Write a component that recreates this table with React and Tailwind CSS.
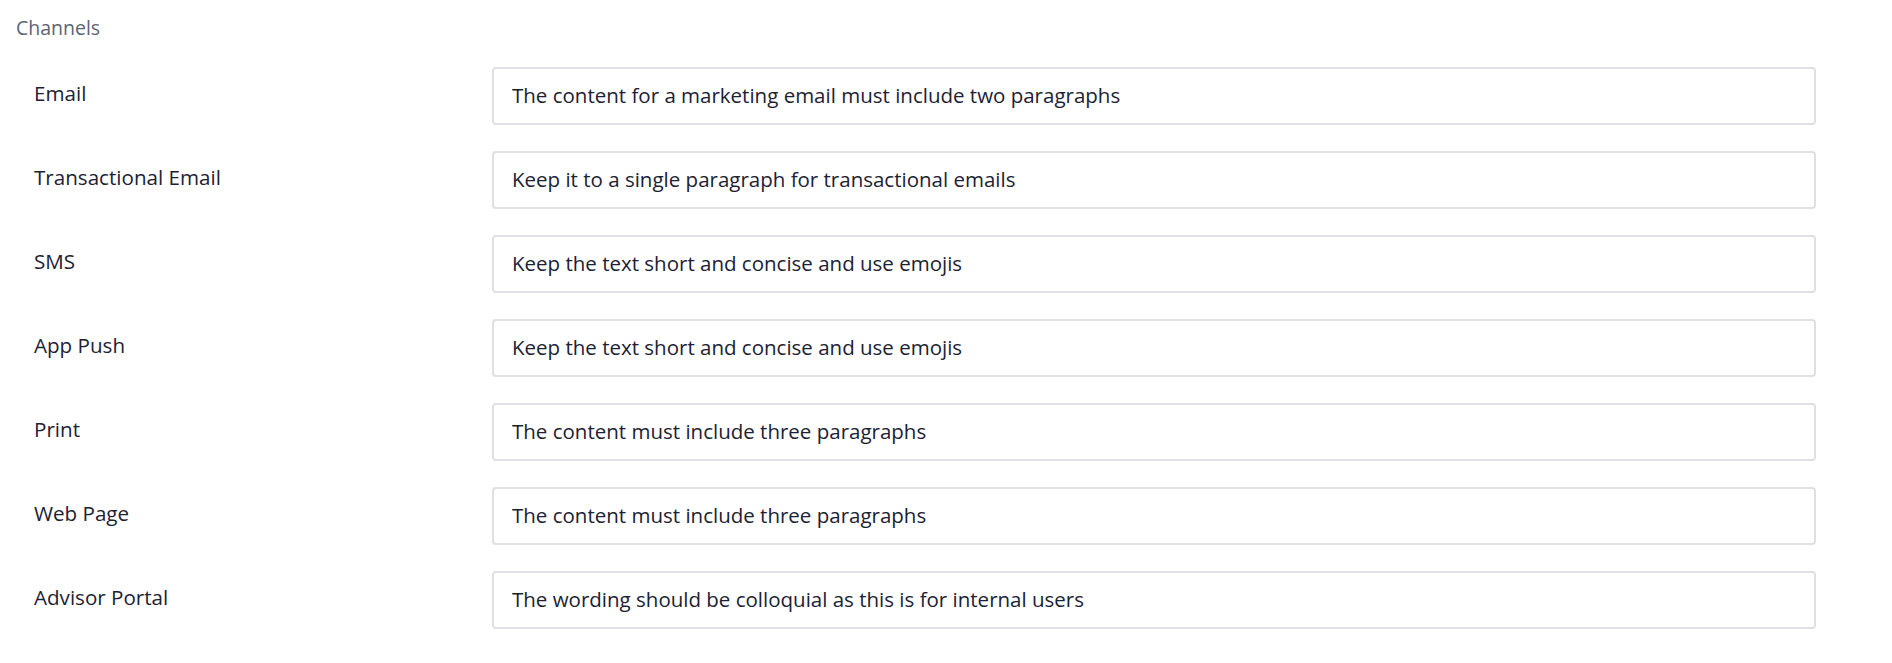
export default function App() {
  const rows = [
    ["Email", "The content for a marketing email must include two paragraphs"],
    ["Transactional Email", "Keep it to a single paragraph for transactional emails"],
    ["SMS", "Keep the text short and concise and use emojis"],
    ["App Push", "Keep the text short and concise and use emojis"],
    ["Print", "The content must include three paragraphs"],
    ["Web Page", "The content must include three paragraphs"],
    ["Advisor Portal", "The wording should be colloquial as this is for internal users"],
  ];
  return (
    <div className="w-[1892px] h-[663px] bg-white font-['Open_Sans',sans-serif] text-[#1c2233]">
      <div className="pl-[16px] pt-[16px] text-[19.5px] leading-[24px] text-[#5b6478]">Channels</div>
      <div className="mt-[27px] flex flex-col gap-[26px] pr-[76px]">
        {rows.map(([label, value]) => (
          <div key={label} className="flex items-start">
            <div className="w-[492px] shrink-0 pl-[34px] pt-[12px] text-[20.6px] leading-[28px]">{label}</div>
            <input
              readOnly
              value={value}
              className="flex-1 h-[58px] border-2 border-[#dfe0e6] rounded-[4px] px-[18px] pb-[2px] text-[20.5px] text-[#1c2233] outline-none font-['Open_Sans',sans-serif]"
            />
          </div>
        ))}
      </div>
    </div>
  );
}
